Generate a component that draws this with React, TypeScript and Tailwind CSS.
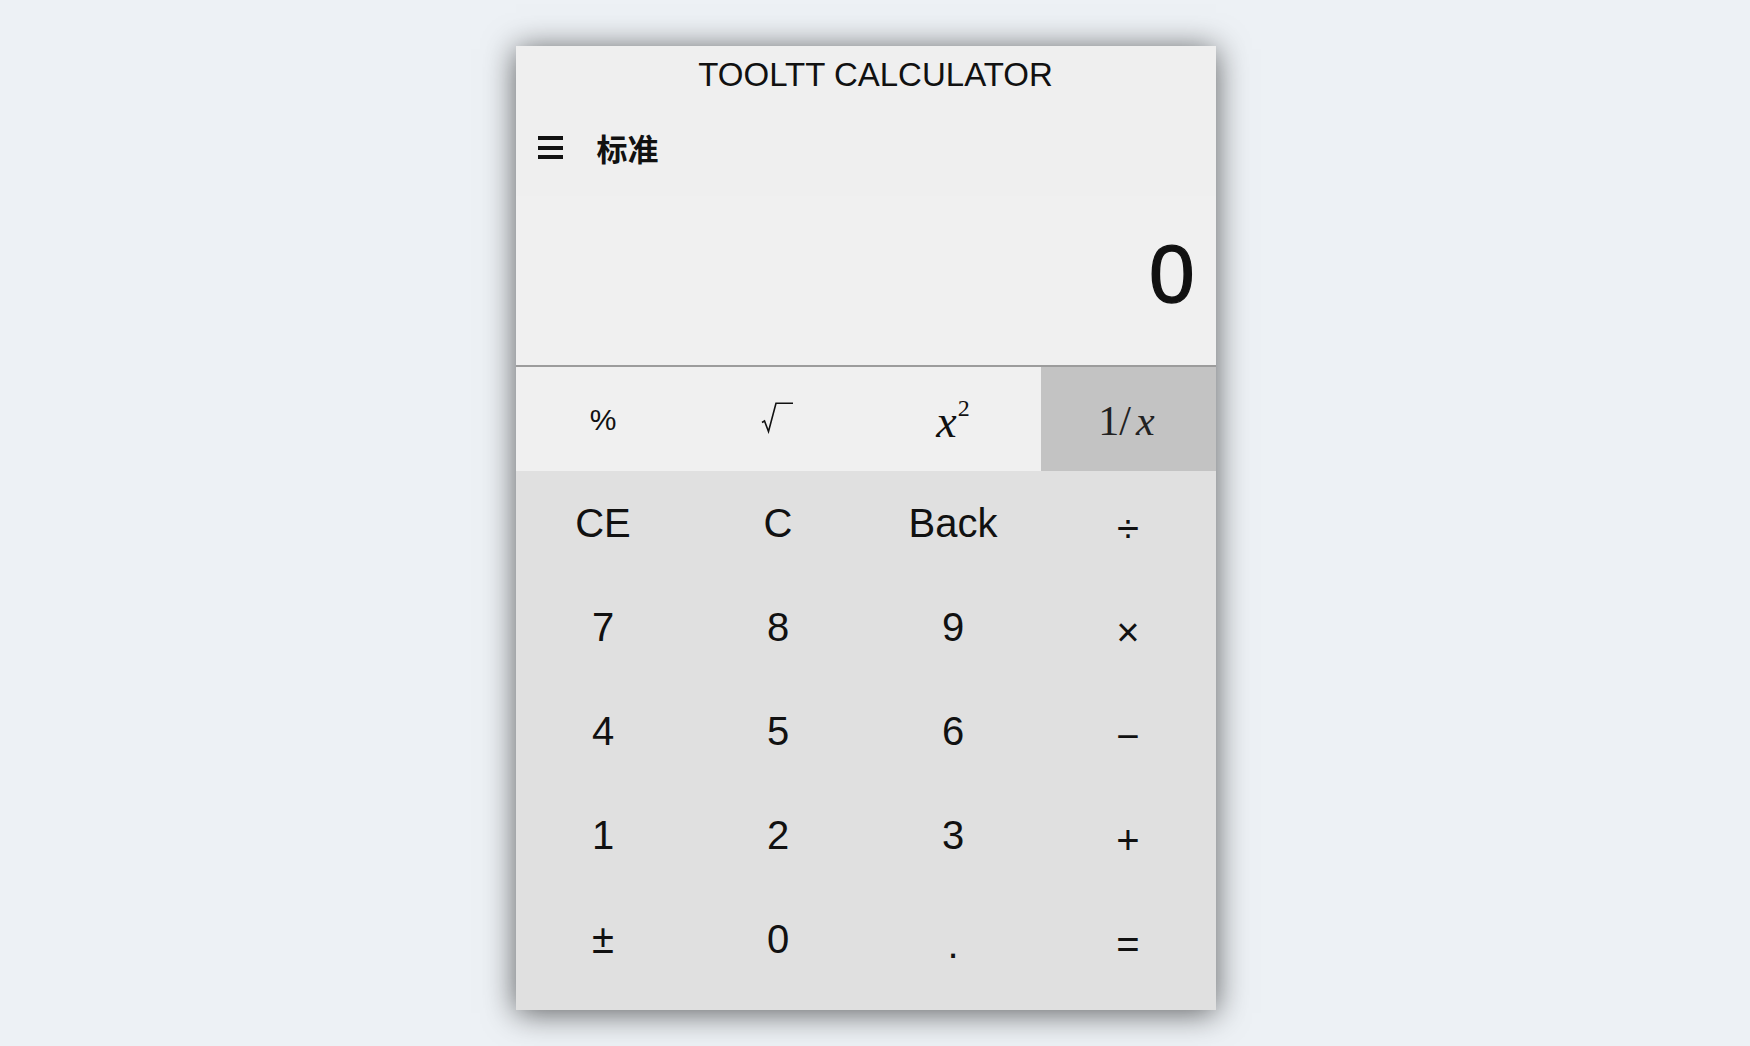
import React from "react";

const sans = { fontFamily: '"Liberation Sans", Arial, sans-serif' };
const serif = { fontFamily: '"Liberation Serif", "Times New Roman", serif' };
const cjk = { fontFamily: '"Noto Sans CJK SC", "Noto Sans", sans-serif' };

const keys = [
  ["CE", "C", "Back", "÷"],
  ["7", "8", "9", "×"],
  ["4", "5", "6", "−"],
  ["1", "2", "3", "+"],
  ["±", "0", ".", "="],
];

// operators sit a little lower than digits in the original
const lowered = ["÷", "×", "−", "+", "=", "."];

function SqrtIcon() {
  return (
    <svg width="34" height="32" viewBox="0 0 34 32" fill="none">
      <path
        d="M1 20.5 L3.5 19 L7.5 29.5 L15 1.2 L32 1.2"
        stroke="#111"
        strokeWidth="1.6"
        strokeLinejoin="miter"
      />
    </svg>
  );
}

function Hamburger() {
  return (
    <div className="flex flex-col gap-[5.5px] w-[25px]">
      <span className="block h-[4px] bg-[#111]" />
      <span className="block h-[4px] bg-[#111]" />
      <span className="block h-[4px] bg-[#111]" />
    </div>
  );
}

export default function App() {
  return (
    <div className="min-h-screen w-full bg-[#edf1f5] flex justify-center pt-[46px] pr-[19px]">
      <div className="w-[700px] h-[964px] flex flex-col shadow-[0_3px_30px_rgba(0,0,0,0.62)] text-[#111]">
        {/* title */}
        <div
          className="h-[58px] bg-[#efefef] flex items-center justify-center pl-5 text-[33px]"
          style={sans}
        >
          TOOLTT CALCULATOR
        </div>

        {/* mode row */}
        <div className="h-[92px] bg-[#efefef] flex items-center pl-[22px] gap-[34px] pb-[5px]">
          <Hamburger />
          <span className="text-[31px] font-bold leading-none" style={cjk}>
            标准
          </span>
        </div>

        {/* display */}
        <div className="h-[171px] bg-[#f0f0f0] border-b-2 border-[#9c9c9c] flex items-center justify-end pr-[21px] pb-[14px]">
          <span
            className="text-[82px] leading-none [-webkit-text-stroke:1.3px_#111]"
            style={sans}
          >
            0
          </span>
        </div>

        {/* function row */}
        <div className="h-[104px] grid grid-cols-4 bg-[#f0f0f0]">
          <button className="flex items-center justify-center text-[30px]" style={sans}>
            %
          </button>
          <button className="flex items-center justify-center pb-[2px]">
            <SqrtIcon />
          </button>
          <button className="flex items-center justify-center" style={serif}>
            <span className="italic text-[46px] leading-none mt-[6px]">x</span>
            <span className="text-[24px] leading-none -mt-[22px] ml-[1px]">2</span>
          </button>
          <button
            className="flex items-center justify-center bg-[#c3c3c3] text-[#222] text-[42px] leading-none pt-[4px] pr-[3px]"
            style={serif}
          >
            <span>1/</span>
            <span className="italic ml-[5px]">x</span>
          </button>
        </div>

        {/* keypad */}
        <div className="flex-1 bg-[#e0e0e0] grid grid-cols-4 grid-rows-[repeat(5,104px)] pb-[19px]">
          {keys.flat().map((k) => (
            <button
              key={k}
              className={`flex items-center justify-center text-[40px] leading-none ${
                lowered.includes(k) ? "pt-[9px]" : ""
              }`}
              style={sans}
            >
              {k}
            </button>
          ))}
        </div>
      </div>
    </div>
  );
}
